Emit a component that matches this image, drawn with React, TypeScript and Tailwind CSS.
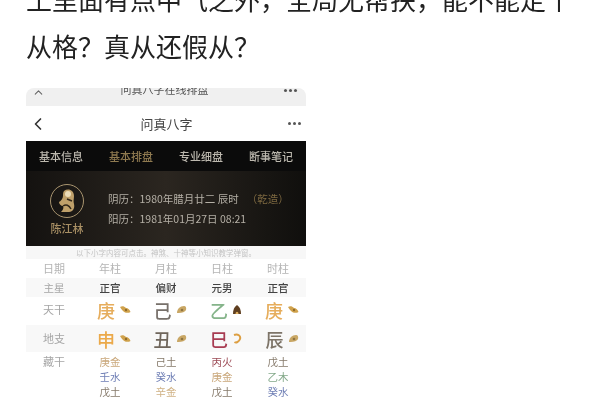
import { ChevronLeft, ChevronUp } from 'lucide-react'

const cjk = "font-['Noto_Sans_CJK_SC','Noto_Sans',sans-serif]"

const Zodiac = ({ color = '#d0a24c' }: { color?: string }) => (
    <svg width="12" height="9" viewBox="0 0 12 9">
        <path d="M1 2 C3 1 5 1 7 3 C9 3 11 5 11.5 7 C9 8.5 6 8 4 6 C3 5 2 3.5 1 2 Z" fill={color} />
        <circle cx="7" cy="5" r="1.2" fill="#8f6a2a" />
    </svg>
)

const Pig = () => (
    <svg width="11" height="9" viewBox="0 0 11 9">
        <path d="M1 8 C1 4 4 1 8 1 C10 1 10.5 3 10 5 C9 7 5 8.5 1 8 Z" fill="#c9a765" />
        <circle cx="6" cy="5" r="1.3" fill="#8f7440" />
    </svg>
)

const Snake = () => (
    <svg width="10" height="11" viewBox="0 0 10 11">
        <path d="M2 2 C6 0.5 9 3 8 6 C7 9 4 10 2.5 9" fill="none" stroke="#dd9f42" strokeWidth="2" />
    </svg>
)

const Hut = () => (
    <svg width="10" height="11" viewBox="0 0 10 11">
        <path d="M5 1 C8 3 9 6 9 10 L1 10 C1 6 2 3 5 1 Z" fill="#5f3f20" />
        <path d="M3.5 10 C3.5 7 6.5 7 6.5 10 Z" fill="#e0b060" />
    </svg>
)

const stems = [
    { char: '庚', color: 'text-[#e6ad5c]', icon: <Zodiac /> },
    { char: '己', color: 'text-[#77706a]', icon: <Pig /> },
    { char: '乙', color: 'text-[#85b48a]', icon: <Hut /> },
    { char: '庚', color: 'text-[#e6ad5c]', icon: <Zodiac /> },
]

const branches = [
    { char: '申', color: 'text-[#eba94a]', icon: <Zodiac /> },
    { char: '丑', color: 'text-[#6f665c]', icon: <Pig /> },
    { char: '巳', color: 'text-[#a83c52]', icon: <Snake /> },
    { char: '辰', color: 'text-[#7d7468]', icon: <Pig /> },
]

const hidden = [
    [['庚金', 'text-[#c9a77a]'], ['壬水', 'text-[#6f7fb5]'], ['戊土', 'text-[#85796a]']],
    [['己土', 'text-[#85796a]'], ['癸水', 'text-[#6f7fb5]'], ['辛金', 'text-[#d0b285]']],
    [['丙火', 'text-[#9c4a55]'], ['庚金', 'text-[#c9a77a]'], ['戊土', 'text-[#85796a]']],
    [['戊土', 'text-[#85796a]'], ['乙木', 'text-[#84a98a]'], ['癸水', 'text-[#6f7fb5]']],
]

const Dots = ({ className }: { className: string }) => (
    <div className={`flex gap-[2px] ${className}`}>
        <span className="w-[3px] h-[3px] rounded-full bg-[#555]" />
        <span className="w-[3px] h-[3px] rounded-full bg-[#555]" />
        <span className="w-[3px] h-[3px] rounded-full bg-[#555]" />
    </div>
)

const Cell = ({ children, className = '' }: { children: React.ReactNode; className?: string }) => (
    <div className={`w-[56px] flex items-center justify-center ${className}`}>{children}</div>
)

const GanRow = ({ label, items, className }: { label: string; items: typeof stems; className: string }) => (
    <div className={`flex ${className}`}>
        <Cell className="text-[11px] text-[#a5a5a5]">{label}</Cell>
        {items.map((it, i) => (
            <Cell key={i} className="gap-[4px] pl-[8px]">
                <span className={`text-[18px] leading-none font-medium ${it.color}`}>{it.char}</span>
                {it.icon}
            </Cell>
        ))}
    </div>
)

const App = () => {
    return (
        <div className={`w-[600px] h-[400px] overflow-hidden bg-white ${cjk}`}>
            <div className="-mt-[25px] pl-[26px] text-[26px] leading-[47px] text-[#222] whitespace-nowrap blur-[0.4px]">
                <p>土里面有点中气之外，全局无帮扶，能不能定个</p>
                <p>从格？真从还假从？</p>
            </div>

            <div className="mt-[19px] ml-[26px] w-[280px] blur-[0.7px]">
                <div className="h-[18px] bg-[#f0f0f0] rounded-t-[8px] flex items-start justify-between px-[6px] overflow-hidden">
                    <ChevronUp size={13} className="text-[#666] -mt-[2px]" />
                    <span className="text-[11px] leading-none text-[#555] -mt-[4px]">问真八字在线排盘</span>
                    <Dots className="mt-[1px] mr-[3px]" />
                </div>
                <div className="h-[35px] flex items-center justify-between pl-[2px] pr-[5px]">
                    <ChevronLeft size={20} className="text-[#333]" />
                    <span className="text-[13px] text-[#444] mr-[3px]">问真八字</span>
                    <Dots className="" />
                </div>

                <div className="h-[105px] bg-[#0b0b0b]">
                    <div className="h-[30px] flex items-center justify-between px-[13px] text-[11px] font-medium">
                        <span className="text-[#bdb9af]">基本信息</span>
                        <span className="text-[#8f7a50]">基本排盘</span>
                        <span className="text-[#bdb9af]">专业细盘</span>
                        <span className="text-[#bdb9af]">断事笔记</span>
                    </div>
                    <div className="h-[75px] bg-gradient-to-r from-[#141210] via-[#2b2620] to-[#100f0d] flex">
                        <div className="w-[82px] flex flex-col items-center pt-[13px]">
                            <div className="w-[34px] h-[34px] rounded-full border border-[#a8946f] flex items-center justify-center">
                                <svg width="24" height="27" viewBox="0 0 24 27">
                                    <path d="M9 3 C13 0 19 2 19 8 C19 11 18 13 19 16 C20 20 18 24 14 24 L6 24 C8 22 9 20 8 18 C6 18 4 16 4 14 C6 13 8 10 8 8 C8 6 8 4 9 3 Z" fill="#bfa06a" />
                                    <circle cx="13" cy="6" r="3" fill="#ecdcb8" />
                                    <path d="M8 18 C11 16 14 17 16 21 M12 11 L17 13" stroke="#33281a" strokeWidth="1.5" fill="none" />
                                </svg>
                            </div>
                            <span className="mt-[2px] text-[11px] leading-[16px] font-medium text-[#a88f64]">陈江林</span>
                        </div>
                        <div className="pt-[18px] text-[10.5px] leading-[20px] text-[#b5b0a6]">
                            <div className="whitespace-nowrap">
                                阴历：1980年腊月廿二 辰时<span className="ml-[8px] text-[#7d6840]">（乾造）</span>
                            </div>
                            <div className="whitespace-nowrap">阳历：1981年01月27日 08:21</div>
                        </div>
                    </div>
                </div>

                <div className="h-[13px] bg-[#f7f7f7] text-[7.5px] leading-[13px] text-[#c4c4c4] text-center whitespace-nowrap">
                    以下小字内容可点击。神煞、十神等小知识教学弹窗。
                </div>

                <div className="flex h-[19px] text-[11px] text-[#b5b5b5]">
                    {['日期', '年柱', '月柱', '日柱', '时柱'].map((t) => (
                        <Cell key={t}>{t}</Cell>
                    ))}
                </div>
                <div className="flex h-[19px] bg-[#f8f8f8] text-[10.5px] font-medium text-[#444]">
                    <Cell className="font-normal text-[#a5a5a5]">主星</Cell>
                    {['正官', '偏财', '元男', '正官'].map((t, i) => (
                        <Cell key={i}>{t}</Cell>
                    ))}
                </div>
                <GanRow label="天干" items={stems} className="h-[28px] pb-[3px]" />
                <GanRow label="地支" items={branches} className="h-[27px] bg-[#f8f8f8]" />
                <div className="flex pt-[2px]">
                    <div className="w-[56px] flex justify-center text-[11px] leading-[15px] text-[#a5a5a5]">藏干</div>
                    {hidden.map((col, i) => (
                        <div key={i} className="w-[56px] flex flex-col items-center text-[10.5px] leading-[15px]">
                            {col.map(([t, c], j) => (
                                <span key={j} className={c}>{t}</span>
                            ))}
                        </div>
                    ))}
                </div>
            </div>
        </div>
    )
}

export default App
